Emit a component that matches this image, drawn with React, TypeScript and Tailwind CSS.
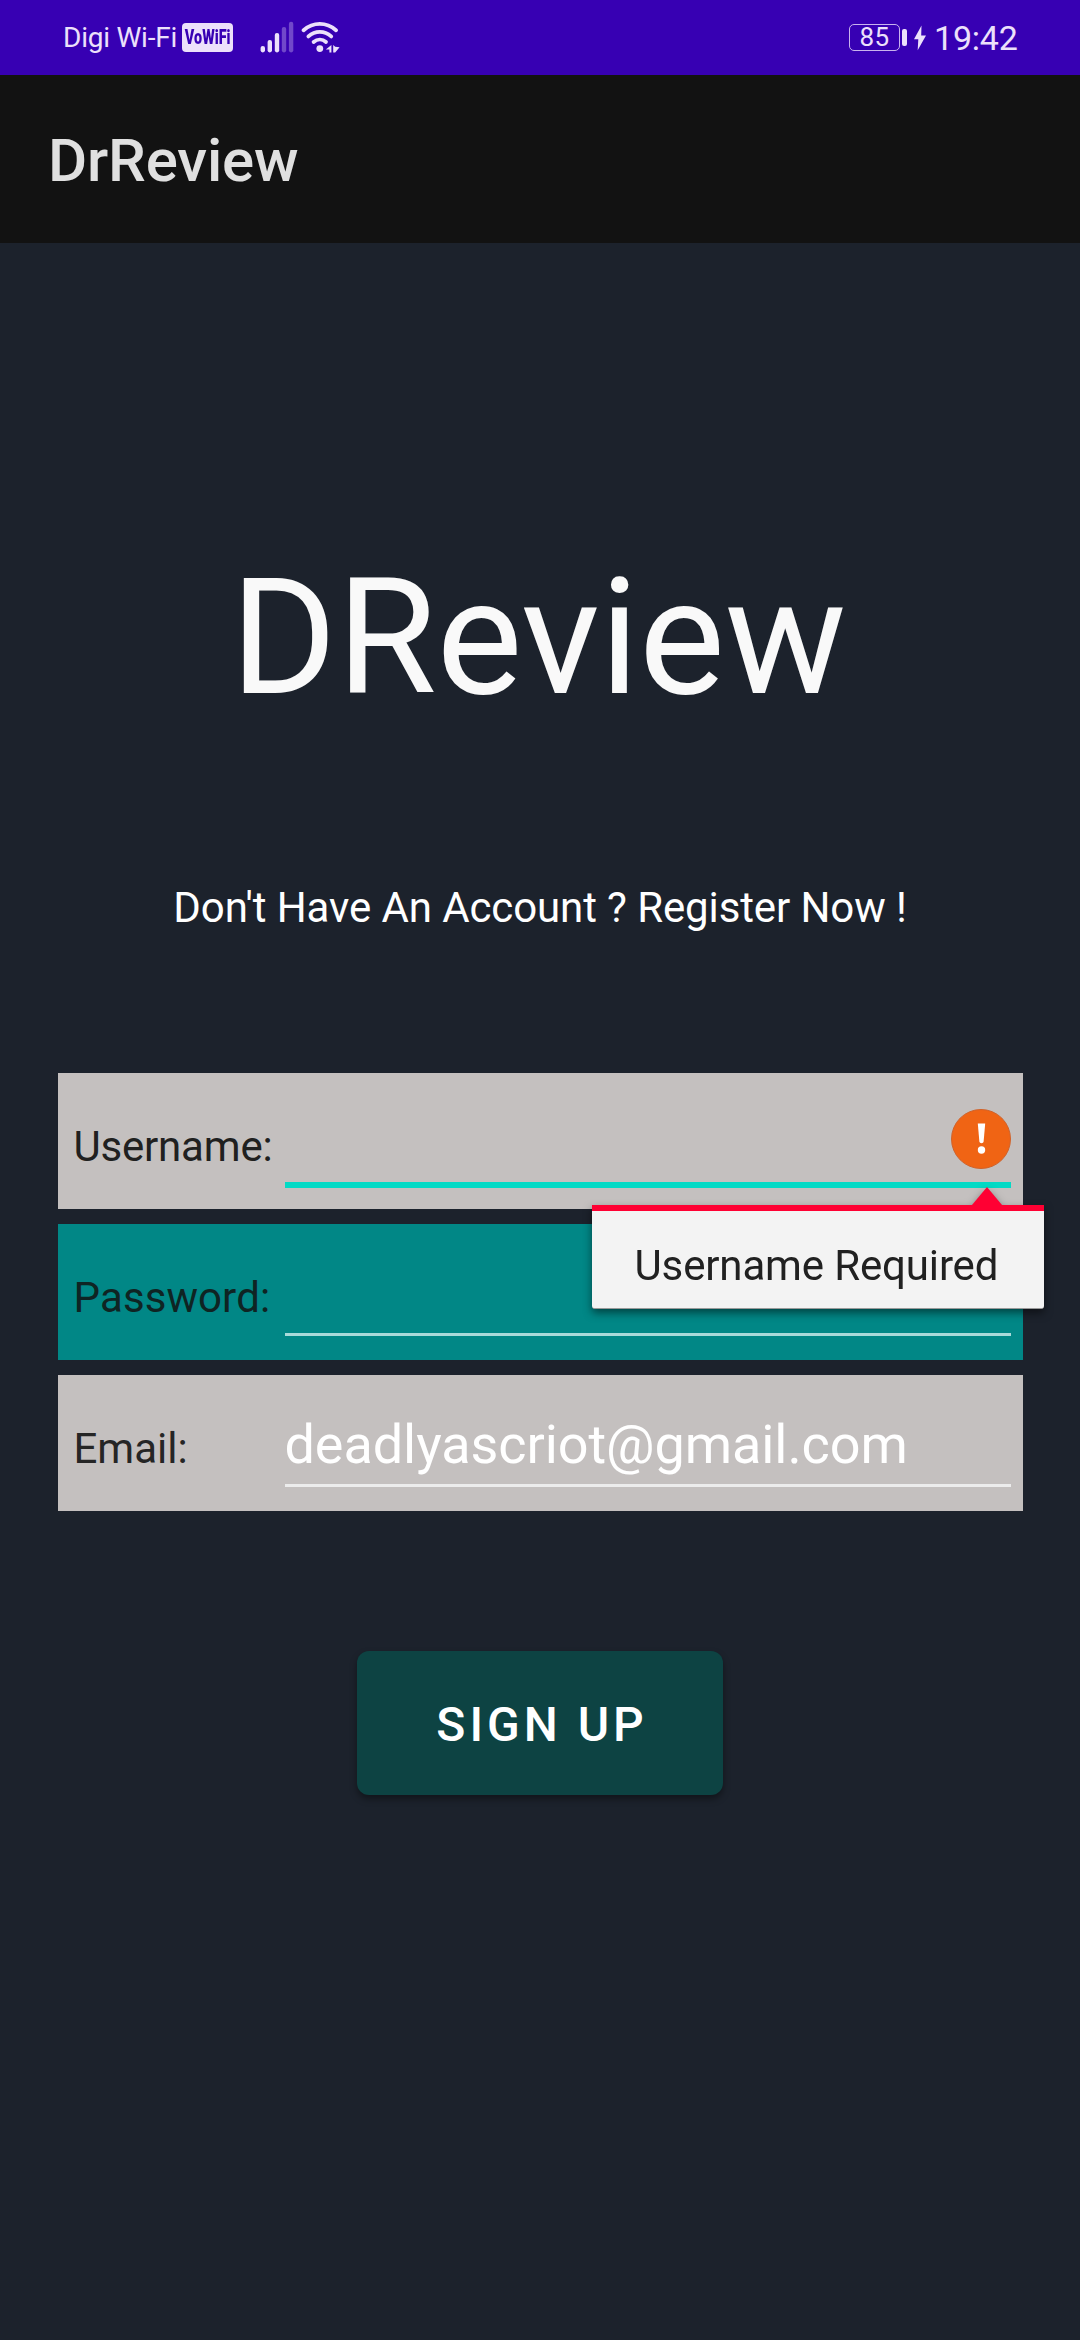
import type { ReactNode } from "react";

function SignalIcon() {
  return (
    <svg className="ml-[27px] mt-[21px] h-8 w-[34px] shrink-0" viewBox="0 0 34 32" fill="#ece0fb">
      <rect x="0.6" y="25" width="4.4" height="6.4" rx="2.1" />
      <rect x="7.6" y="19" width="4.4" height="12.4" rx="2.1" />
      <rect x="14.8" y="12" width="4.4" height="19.4" rx="2.1" />
      <rect x="21.8" y="6" width="4.4" height="25.4" rx="2.1" opacity="0.32" />
      <rect x="28.9" y="0.8" width="4.4" height="30.6" rx="2.1" opacity="0.32" />
    </svg>
  );
}

function WifiIcon() {
  return (
    <svg className="ml-[7px] mt-[21px] h-8 w-[40px] shrink-0" viewBox="0 0 40 32" fill="none" stroke="#ece0fb" strokeWidth="3.8" strokeLinecap="round">
      <path d="M2.6 9.2C12.2 0.8 25.4 0.8 35 9.2" />
      <path d="M7.4 15.4C14.2 9.4 23.4 9.4 30.2 15.4" />
      <path d="M12.6 21C16.4 17.8 21.4 17.8 25 21" />
      <circle cx="18.8" cy="27.6" r="3.4" fill="#ece0fb" stroke="none" />
      <path d="M30.4 24v7.4h-2v-2.8h-3.6zM32.2 24l2 1.8 4.4.4-4.4 5.2h-2z" fill="#ece0fb" stroke="none" />
    </svg>
  );
}

function StatusBar() {
  return (
    <header className="flex h-[75px] bg-[#3700b3] text-[#ece0fb]">
      <span className="ml-[63px] mt-[21px] w-[119px] whitespace-nowrap text-[28px] leading-[33px] tracking-[-0.23px]">Digi Wi-Fi</span>
      <span className="mt-[23px] flex h-[29px] w-[51px] items-center justify-center rounded-[4px] bg-[#ece0fb] pb-px">
        <span className="scale-x-[0.72] whitespace-nowrap text-[20px] font-black leading-none text-[#3700b3]">VoWiFi</span>
      </span>
      <SignalIcon />
      <WifiIcon />
      <div className="ml-auto mt-6 flex h-[27px] w-[51px] items-center justify-center rounded-[5px] border-[1.5px] border-[#c9b3ee] pb-[2px] text-[26px] leading-none tracking-[0.3px]">
        85
      </div>
      <div className="ml-[2px] mt-[29px] h-[17px] w-[5px] rounded-[2px] bg-[#ece0fb]" />
      <svg className="ml-[7px] mt-[25px] h-[26px] w-[12px] shrink-0" viewBox="0 0 12 26" fill="#ece0fb">
        <path d="M7.5 0.5L0 14.2h4.3L3.7 25.2 12 10.6H7.2z" />
      </svg>
      <span className="ml-2 mr-[61px] mt-[18px] w-[85px] whitespace-nowrap text-[34px] leading-10 tracking-[-0.2px]">19:42</span>
    </header>
  );
}

function ErrorPopup({ text }: { text: string }) {
  return (
    <div className="absolute right-[-21px] top-[114px] z-10 flex w-[452px] flex-col drop-shadow-[0_4px_4px_rgba(0,0,0,0.5)]">
      <svg className="ml-[380px] h-[18px] w-[30px]" viewBox="0 0 30 18" fill="#ff0033">
        <path d="M15 0L30 18H0z" />
      </svg>
      <div className="h-[104px] rounded-b-[3px] border-b border-[#999] border-t-[6px] border-t-[#ff0033] bg-[#f3f3f3] pl-[43px] pt-[30px] text-[42px] leading-[49px] tracking-[-0.14px] text-[#212121]">
        {text}
      </div>
    </div>
  );
}

function ErrorIcon() {
  return (
    <svg className="absolute right-0 top-0 h-[60px] w-[60px]" viewBox="0 0 60 60">
      <circle cx="30" cy="30" r="29.5" fill="#f06414" stroke="#d0622a" />
      <path d="M26.8 14.6h7.4l-1.6 18.2q-.2 1.4-2.1 1.4t-2.1-1.4z" fill="#fff" />
      <circle cx="30.5" cy="41" r="3.7" fill="#fff" />
    </svg>
  );
}

type FieldProps = {
  label: string;
  rowClass: string;
  lineClass: string;
  value?: string;
  hasError?: boolean;
  children?: ReactNode;
};

function Field({ label, rowClass, lineClass, value, hasError, children }: FieldProps) {
  return (
    <div className={`relative flex h-[136px] pr-3 ${rowClass}`}>
      <label className="w-[227px] pl-4 pt-[49px] text-[42px] leading-[49px] [font-kerning:none]">{label}</label>
      <div className="flex-1 pt-9">
        <div className="relative h-[73px]">
          <span className="block whitespace-nowrap pt-[2px] text-[54px] leading-[63px] tracking-[-0.08px] text-white">{value}</span>
          {hasError && <ErrorIcon />}
        </div>
        <div className={lineClass} />
      </div>
      {children}
    </div>
  );
}

export default function App() {
  return (
    <div className="flex h-[2340px] w-[1080px] flex-col overflow-hidden bg-[#1c222c] font-['Roboto',sans-serif]">
      <StatusBar />
      <div className="flex h-[168px] items-center bg-[#121212] pl-12 pt-[4px] text-[60px] font-medium leading-[70px] tracking-[-0.15px] text-[#e0e0e0]">
        DrReview
      </div>
      <main className="flex flex-col items-center">
        <h1 className="mt-[300px] pr-[3px] text-[162px] leading-[190px] tracking-[-0.1px] text-[#f9f9f9]">DReview</h1>
        <p className="mt-[150px] whitespace-nowrap text-[42px] leading-[49px] tracking-[-0.11px] text-white">Don't Have An Account ? Register Now !</p>
        <form className="mt-[141px] flex w-[965px] flex-col gap-[15px]">
          <Field label="Username:" hasError rowClass="bg-[#c4c0bf] text-[#202020] tracking-[-0.2px]" lineClass="h-[6px] bg-[#03dac5]">
            <ErrorPopup text="Username Required" />
          </Field>
          <Field label="Password:" rowClass="bg-[#018786] text-[#0f2423] tracking-[0.06px]" lineClass="h-[3px] bg-[#a9dada]" />
          <Field label="Email:" value="deadlyascriot@gmail.com" rowClass="bg-[#c4c0bf] text-[#252525]" lineClass="h-[3px] bg-[#ececec]" />
        </form>
        <button className="mt-[140px] h-36 w-[366px] rounded-[12px] bg-[#0d4343] pl-1 pt-1 text-[48px] font-medium tracking-[4px] text-white shadow-[0_4px_7px_rgba(0,0,0,0.4)]">
          SIGN UP
        </button>
      </main>
    </div>
  );
}
